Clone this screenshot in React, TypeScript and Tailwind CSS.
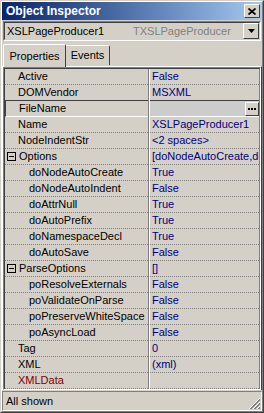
import React from "react";

type Row = {
  name: string;
  value: string;
  level?: 0 | 1;
  expand?: boolean;
  selected?: boolean;
  red?: boolean;
};

const rows: Row[] = [
  { name: "Active", value: "False" },
  { name: "DOMVendor", value: "MSXML" },
  { name: "FileName", value: "", selected: true },
  { name: "Name", value: "XSLPageProducer1" },
  { name: "NodeIndentStr", value: "<2 spaces>" },
  { name: "Options", value: "[doNodeAutoCreate,doNodeAutoIndent,doAttrNull,doAutoPrefix,doNamespaceDecl]", expand: true },
  { name: "doNodeAutoCreate", value: "True", level: 1 },
  { name: "doNodeAutoIndent", value: "False", level: 1 },
  { name: "doAttrNull", value: "True", level: 1 },
  { name: "doAutoPrefix", value: "True", level: 1 },
  { name: "doNamespaceDecl", value: "True", level: 1 },
  { name: "doAutoSave", value: "False", level: 1 },
  { name: "ParseOptions", value: "[]", expand: true },
  { name: "poResolveExternals", value: "False", level: 1 },
  { name: "poValidateOnParse", value: "False", level: 1 },
  { name: "poPreserveWhiteSpace", value: "False", level: 1 },
  { name: "poAsyncLoad", value: "False", level: 1 },
  { name: "Tag", value: "0" },
  { name: "XML", value: "(xml)" },
  { name: "XMLData", value: "", red: true },
];

function ExpandBox() {
  return (
    <div className="w-[9px] h-[9px] border border-[#000000] bg-[#d4d0c8] flex items-center justify-center shrink-0">
      <div className="w-[5px] h-[1px] bg-black" />
    </div>
  );
}

function GridRow({ row, nextSelected }: { row: Row; nextSelected: boolean }) {
  const lineCls = row.selected
    ? "border-b border-solid border-white"
    : nextSelected
    ? "border-b border-solid border-[#404040]"
    : "border-b border-dotted border-[#808080]";
  return (
    <div className="flex h-[16px] shrink-0">
      <div
        className={`w-[143px] shrink-0 flex items-center overflow-hidden whitespace-nowrap ${lineCls} ${
          row.selected ? "border-l border-l-[#404040]" : ""
        } ${row.level === 1 ? "pl-[24px]" : row.expand ? "pl-[2px]" : "pl-[13px]"} ${
          row.selected && row.level !== 1 ? "pl-[12px]" : ""
        }`}
      >
        {row.expand && <ExpandBox />}
        <span className={`${row.expand ? "ml-[3px]" : ""} ${row.red ? "text-[#800000]" : "text-black"} leading-none`}>
          {row.name}
        </span>
      </div>
      <div className="w-[1px] shrink-0 bg-[#808080]" />
      <div className="w-[1px] shrink-0 bg-white" />
      <div
        className={`flex-1 min-w-0 flex items-center overflow-hidden whitespace-nowrap ${lineCls} ${
          row.selected ? "bg-[#cccccc] pl-[2px] pr-[0px]" : "pl-[2px]"
        }`}
      >
        <span className="text-[#000080] leading-none flex-1 min-w-0 overflow-hidden">{row.value}</span>
        {row.selected && (
          <div className="w-[14px] h-[14px] shrink-0 bg-[#d4d0c8] border-t border-l border-white border-r border-b border-r-[#404040] border-b-[#404040] flex items-center justify-center">
            <svg width="8" height="2" viewBox="0 0 8 2">
              <rect x="0" y="0" width="2" height="2" fill="#000" />
              <rect x="3" y="0" width="2" height="2" fill="#000" />
              <rect x="6" y="0" width="2" height="2" fill="#000" />
            </svg>
          </div>
        )}
      </div>
    </div>
  );
}

export default function App() {
  return (
    <div
      className="w-[264px] h-[413px] overflow-hidden bg-[#d4d0c8] text-[11px] text-black"
      style={{ fontFamily: '"Liberation Sans", Arial, sans-serif' }}
    >
      <div className="w-full h-full border border-t-[#d4d0c8] border-l-[#d4d0c8] border-r-[#404040] border-b-[#404040]">
        <div className="w-full h-full flex flex-col border border-t-white border-l-white border-r-[#808080] border-b-[#808080]">
          {/* Title bar */}
          <div className="h-[18px] shrink-0 flex items-center bg-linear-to-r from-[#0a246a] to-[#a6caf0] pl-[4px] pr-[2px]">
            <span className="text-white font-bold text-[12px] leading-none flex-1">Object Inspector</span>
            <div className="w-[16px] h-[14px] bg-[#d4d0c8] border-t border-l border-white border-r border-b border-r-[#404040] border-b-[#404040] flex items-center justify-center">
              <svg width="8" height="7" viewBox="0 0 8 7">
                <path d="M0.5 0.5 L7.5 6.5 M7.5 0.5 L0.5 6.5" stroke="#000" strokeWidth="1.7" />
              </svg>
            </div>
          </div>

          {/* Combo */}
          <div className="mt-[1px] mx-[1px] h-[20px] shrink-0 border border-t-[#808080] border-l-[#808080] border-r-white border-b-white">
            <div className="w-full h-full flex items-center border border-t-[#404040] border-l-[#404040] border-r-[#d4d0c8] border-b-[#d4d0c8]">
              <span className="pl-[2px] w-[128px] shrink-0 leading-none whitespace-nowrap">XSLPageProducer1</span>
              <span className="flex-1 text-[#808080] leading-none whitespace-nowrap overflow-hidden">TXSLPageProducer</span>
              <div className="w-[16px] h-[16px] shrink-0 bg-[#d4d0c8] border-t border-l border-white border-r border-b border-r-[#404040] border-b-[#404040] flex items-center justify-center">
                <svg width="7" height="4" viewBox="0 0 7 4">
                  <path d="M0 0 H7 L3.5 4 Z" fill="#000" />
                </svg>
              </div>
            </div>
          </div>

          {/* Tabs */}
          <div className="h-[24px] mt-[1px] shrink-0 flex items-end pl-[1px]">
            <div className="h-[23px] w-[63px] bg-[#d4d0c8] border-t border-l border-white border-r border-r-[#404040] rounded-t-[2px] flex items-center justify-center -mb-[1px] relative z-10">
              <span className="leading-none">Properties</span>
            </div>
            <div className="h-[20px] w-[44px] bg-[#d4d0c8] border-t border-white border-r border-r-[#404040] rounded-tr-[2px] flex items-center justify-center mb-[1px]">
              <span className="leading-none">Events</span>
            </div>
          </div>

          {/* Sheet */}
          <div className="flex-1 min-h-0 flex flex-col border-t border-white border-l border-r border-r-[#404040]">
            <div className="flex-1 min-h-0 border border-t-[#808080] border-l-[#808080] border-r-white border-b-white">
              <div className="w-full h-full flex flex-col overflow-hidden border-t border-l border-[#404040] border-r border-r-[#808080] border-b-0">
                {rows.map((r, i) => (
                  <GridRow key={r.name} row={r} nextSelected={!!rows[i + 1]?.selected} />
                ))}
                <div className="flex-1 flex">
                  <div className="w-[143px] shrink-0" />
                  <div className="w-[1px] shrink-0 bg-[#808080]" />
                  <div className="w-[1px] shrink-0 bg-white" />
                </div>
              </div>
            </div>
          </div>

          {/* Status bar */}
          <div className="h-[20px] mt-[1px] shrink-0 flex items-stretch">
            <div className="flex-1 flex items-center border border-t-[#808080] border-l-[#808080] border-r-white border-b-white pl-[3px] relative">
              <span className="leading-none">All shown</span>
              <svg className="absolute right-[0px] bottom-[0px]" width="12" height="12" viewBox="0 0 12 12">
                <path d="M11 1 L1 11 M11 5 L5 11 M11 9 L9 11" stroke="#808080" strokeWidth="1" />
                <path d="M11 2 L2 11 M11 6 L6 11 M11 10 L10 11" stroke="#808080" strokeWidth="1" />
                <path d="M11 0 L0 11 M11 4 L4 11 M11 8 L8 11" stroke="#ffffff" strokeWidth="1" />
              </svg>
            </div>
          </div>
        </div>
      </div>
    </div>
  );
}
